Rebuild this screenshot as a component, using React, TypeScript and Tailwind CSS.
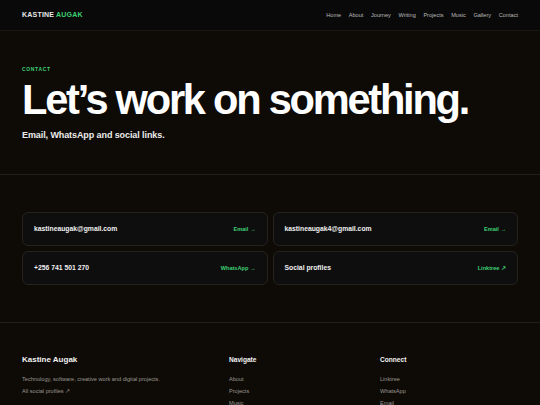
const nav = ['Home', 'About', 'Journey', 'Writing', 'Projects', 'Music', 'Gallery', 'Contact']

const cards = [
  { value: 'kastineaugak@gmail.com', label: 'Email →' },
  { value: 'kastineaugak4@gmail.com', label: 'Email →' },
  { value: '+256 741 501 270', label: 'WhatsApp →' },
  { value: 'Social profiles', label: 'Linktree ↗' },
]

function FooterCol({ title, items }: { title: string; items: string[] }) {
  return (
    <div>
      <h4 className="text-[6.6px] font-bold leading-[10px] text-[#f2f2f2]">{title}</h4>
      <ul className="mt-[10px] flex flex-col gap-[4px]">
        {items.map((i) => (
          <li key={i} className="text-[5.6px] leading-[8px] text-[#9a9690]">
            {i}
          </li>
        ))}
      </ul>
    </div>
  )
}

export default function App() {
  return (
    <div
      className="min-h-[405px] w-[540px] overflow-hidden bg-[#0e0b07] text-white"
      style={{ fontFamily: '"Liberation Sans", Arial, sans-serif' }}
    >
      <header className="flex h-[31px] items-center justify-between border-b border-[#1a1712] bg-[#09090a] px-[22px]">
        <div className="text-[7px] font-bold uppercase tracking-[0.03em] text-[#e8e8e8]">
          Kastine <span className="text-[#3ecf72]">Augak</span>
        </div>
        <nav className="flex gap-[7.6px]">
          {nav.map((n) => (
            <a key={n} className="text-[5.6px] text-[#b9b9b9]">
              {n}
            </a>
          ))}
        </nav>
      </header>

      <section className="border-b border-[#221e18] px-[22px] pb-[33px] pt-[35px]">
        <p className="text-[5px] font-bold uppercase leading-[7px] tracking-[0.13em] text-[#3ecf72]">Contact</p>
        <h1 className="mt-[6px] text-[41.6px] font-bold leading-[42px] tracking-[-0.054em] text-white">
          Let’s work on something.
        </h1>
        <p className="mt-[8px] text-[9px] font-bold leading-[12px] tracking-[-0.01em] text-[#ececec]">
          Email, WhatsApp and social links.
        </p>
      </section>

      <section className="border-b border-[#221e18] px-[22px] py-[37px]">
        <div className="grid grid-cols-2 gap-[5px]">
          {cards.map((c) => (
            <div
              key={c.value}
              className="flex h-[34px] items-center justify-between rounded-[6px] border border-[#26221d] bg-[#0e0e0f] px-[11px]"
            >
              <span className="text-[6.8px] font-bold text-[#f0f0f0]">{c.value}</span>
              <span className="text-[5.6px] font-bold text-[#3ecf72]">{c.label}</span>
            </div>
          ))}
        </div>
      </section>

      <footer className="grid grid-cols-[207px_151px_1fr] px-[22px] pt-[32px]">
        <div>
          <h3 className="text-[8px] font-bold leading-[10px] text-[#f2f2f2]">Kastine Augak</h3>
          <p className="mt-[10px] text-[5.6px] leading-[8px] text-[#9a9690]">
            Technology, software, creative work and digital projects.
          </p>
          <p className="mt-[4px] text-[5.6px] leading-[8px] text-[#9a9690]">All social profiles ↗</p>
        </div>
        <FooterCol title="Navigate" items={['About', 'Projects', 'Music']} />
        <FooterCol title="Connect" items={['Linktree', 'WhatsApp', 'Email']} />
      </footer>
    </div>
  )
}
